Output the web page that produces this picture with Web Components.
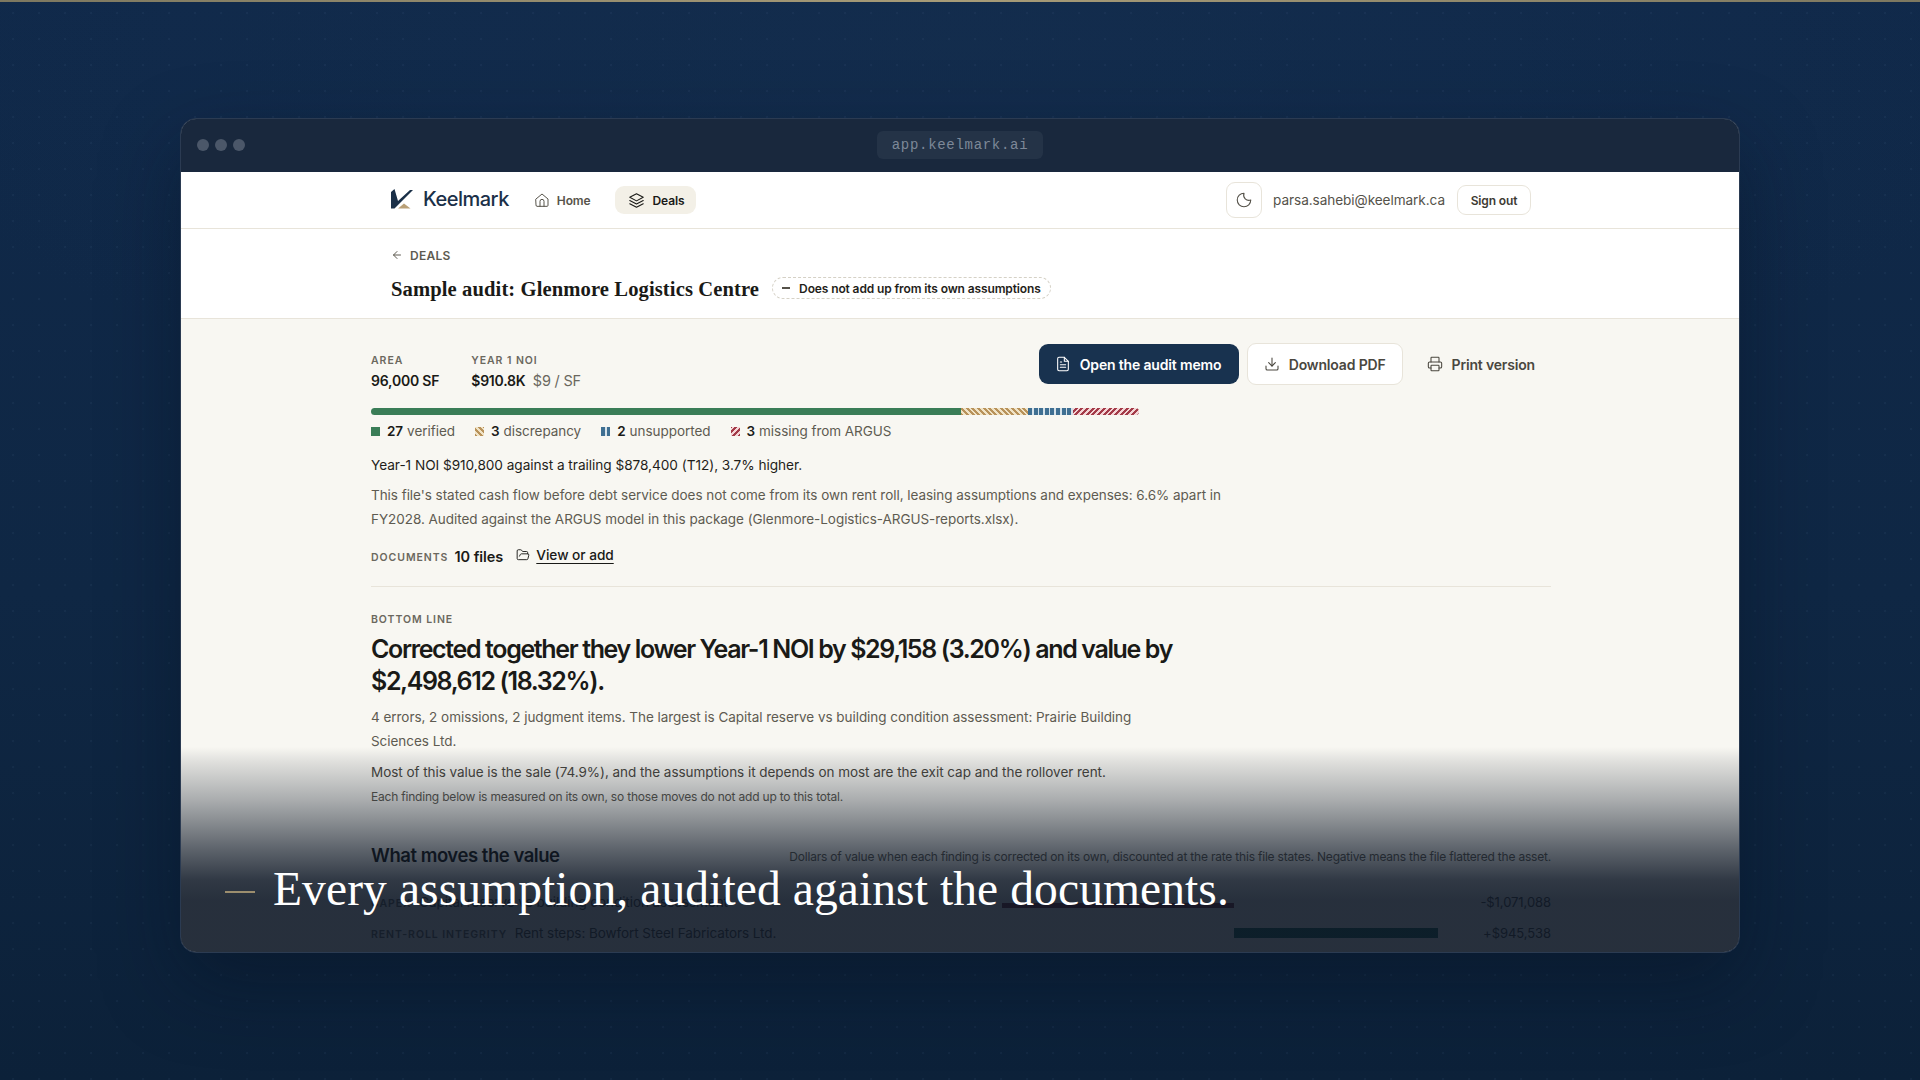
<!doctype html>
<html>
<head>
<meta charset="utf-8">
<style>
  html, body { margin: 0; padding: 0; height: 100%; overflow: hidden; background: #0f2640; }
  body { font-family: Inter, "Noto Sans", sans-serif; }
</style>
</head>
<body>
<km-stage>
  <km-window>
    <km-nav></km-nav>
    <km-deal-header></km-deal-header>
    <km-content>
      <km-summary></km-summary>
      <km-bottom-line></km-bottom-line>
      <km-movers></km-movers>
    </km-content>
  </km-window>
  <km-caption>Every assumption, audited against the documents.</km-caption>
</km-stage>

<script>
const icons = {
  home: '<path d="M3 10.5 12 3l9 7.5V20a1.5 1.5 0 0 1-1.5 1.5h-15A1.5 1.5 0 0 1 3 20z"/><path d="M9 21.5V14a3 3 0 0 1 6 0v7.5"/>',
  layers: '<path d="m12 2.5 9.5 5-9.5 5-9.5-5z"/><path d="m2.5 12 9.5 5 9.5-5"/><path d="m2.5 16.5 9.5 5 9.5-5"/>',
  moon: '<path d="M12 3a7 7 0 0 0 9 9 9 9 0 1 1-9-9z"/>',
  file: '<path d="M14 2H6a2 2 0 0 0-2 2v16a2 2 0 0 0 2 2h12a2 2 0 0 0 2-2V8z"/><path d="M14 2v6h6"/><path d="M8 13h8M8 17h8M8 9h2"/>',
  download: '<path d="M21 15v4a2 2 0 0 1-2 2H5a2 2 0 0 1-2-2v-4"/><path d="m7 10 5 5 5-5"/><path d="M12 15V3"/>',
  printer: '<path d="M6 9V3a1 1 0 0 1 1-1h10a1 1 0 0 1 1 1v6"/><path d="M6 18H4a2 2 0 0 1-2-2v-5a2 2 0 0 1 2-2h16a2 2 0 0 1 2 2v5a2 2 0 0 1-2 2h-2"/><rect x="6" y="14" width="12" height="8" rx="1"/>',
  folder: '<path d="m6 14 1.5-2.9A2 2 0 0 1 9.2 10H20a2 2 0 0 1 1.9 2.5l-1.5 6a2 2 0 0 1-2 1.5H4a2 2 0 0 1-2-2V5a2 2 0 0 1 2-2h3.9a2 2 0 0 1 1.7.9l.8 1.2a2 2 0 0 0 1.7.9H18a2 2 0 0 1 2 2v2"/>',
  back: '<path d="m12 19-7-7 7-7"/><path d="M19 12H5"/>'
}
const icon = (name, size, width = 1.75) =>
  `<svg width="${size}" height="${size}" viewBox="0 0 24 24" fill="none" stroke="currentColor" stroke-width="${width}" stroke-linecap="round" stroke-linejoin="round" style="flex:none;display:block">${icons[name]}</svg>`

const hatch = {
  tan: 'repeating-linear-gradient(45deg,#b8925a 0 2px,#f0e3c6 2px 4px)',
  blue: 'repeating-linear-gradient(90deg,#3f6f92 0 4px,#d6e2ea 4px 5.6px)',
  red: 'repeating-linear-gradient(-45deg,#a33a48 0 2px,#f4d5d6 2px 4px)'
}

// small helper, every element is the same shape: markup plus styles in an open root
const define = (tag, style, html) => {
  customElements.define(tag, class extends HTMLElement {
    constructor() {
      super()
      const shadowRoot = this.attachShadow({ mode: 'open' })
      shadowRoot.innerHTML = `<style>${style}</style>${html}`
    }
  })
}

define('km-stage', `
  :host {
    display: block;
    width: 1920px;
    height: 1080px;
    box-sizing: border-box;
    padding-top: 118px;
    background-color: #0f2742;
    background-image:
      radial-gradient(circle at 1px 1px, rgba(130,160,200,.06) 1.1px, transparent 1.6px),
      radial-gradient(ellipse 1100px 420px at 50% 4%, rgba(22,48,80,.5) 0%, rgba(22,48,80,0) 100%),
      linear-gradient(180deg, #10294a 0%, #0f2744 55%, #0c2139 100%);
    background-size: 26px 26px, auto, auto;
    background-position: 12px 12px, 0 0, 0 0;
    position: relative;
    overflow: hidden;
  }
  .strip {
    position: absolute; top: 0; left: 0; right: 0; height: 2px;
    background: linear-gradient(90deg, #7d7860, #a89c78 50%, #7d7860);
  }
  .frame { position: relative; width: 1560px; height: 835px; margin-left: 180px; }
`, `
  <div class="strip"></div>
  <div class="frame"><slot></slot></div>
`)

define('km-window', `
  :host {
    display: flex;
    flex-direction: column;
    height: 835px;
    box-sizing: border-box;
    border: 1px solid #2b3b52;
    border-radius: 16px;
    overflow: hidden;
    background: #f8f7f2;
    background-clip: padding-box;
    color: #1a1a17;
    box-shadow: 0 30px 80px rgba(5,15,30,.4);
    position: relative;
  }
  .bar {
    flex: none;
    height: 53px;
    box-sizing: border-box;
    padding: 0 16px 2px;
    background: #19283d;
    display: grid;
    grid-template-columns: 1fr auto 1fr;
    align-items: center;
  }
  .dots { display: flex; gap: 6px; }
  .dots i { width: 12px; height: 12px; border-radius: 50%; background: #4b5769; }
  .url {
    font: 14px "Liberation Mono", "DejaVu Sans Mono", monospace;
    letter-spacing: .7px;
    color: #7d8898;
    background: #243347;
    border-radius: 6px;
    padding: 0 15px;
    height: 28px;
    line-height: 28px;
  }
  .fade {
    position: absolute; left: 0; right: 0; bottom: 0; height: 205px;
    background: linear-gradient(180deg,
      rgba(10,20,35,0) 0%,
      rgba(10,20,35,.1) 7%,
      rgba(10,20,35,.33) 26%,
      rgba(10,20,35,.65) 50%,
      rgba(10,20,35,.84) 65%,
      rgba(10,20,35,.88) 75%,
      rgba(10,20,35,.88) 100%);
    pointer-events: none;
  }
`, `
  <div class="bar">
    <div class="dots"><i></i><i></i><i></i></div>
    <div class="url">app.keelmark.ai</div>
    <div></div>
  </div>
  <slot></slot>
  <div class="fade"></div>
`)

define('km-nav', `
  :host {
    display: flex;
    flex: none;
    align-items: center;
    height: 56px;
    padding: 0 208px 0 210px;
    background: #fff;
    border-bottom: 1px solid #e8e4da;
    font-size: 12px;
    letter-spacing: -.01em;
  }
  .logo { display: flex; align-items: center; gap: 10px; margin-right: 14px; margin-top: -2px; }
  .word { font-size: 20px; font-weight: 500; color: #1b3048; letter-spacing: -.025em; }
  .link { display: flex; align-items: center; gap: 7px; height: 28px; padding: 0 11px; font-weight: 600; color: #57544b; border-radius: 9px; }
  .link.on { background: #f3f0e7; color: #1a1a17; margin-left: 13px; padding: 0 12px 0 13px; gap: 8px; }
  .right { margin-left: auto; display: flex; align-items: center; }
  .moon { width: 36px; height: 36px; display: grid; place-items: center; border: 1px solid #e8e4da; border-radius: 9px; color: #55524a; box-sizing: border-box; }
  .mail { font-size: 13.6px; color: #55524a; margin: 0 12px 0 11px; letter-spacing: -.005em; }
  .out { height: 30px; width: 74px; box-sizing: border-box; display: grid; place-items: center; border: 1px solid #e8e4da; border-radius: 9px; font-weight: 600; color: #3d3b34; }
`, `
  <div class="logo">
    <svg width="22" height="20" viewBox="0 0 22 20">
      <path d="M0 3 3.5 0 7 12 19 1h3L3.5 19.5H0z" fill="#1b3048"/>
      <path d="M7 19.5 13 14.5 19.5 19.5z" fill="#b9a077"/>
    </svg>
    <span class="word">Keelmark</span>
  </div>
  <div class="link">${icon('home', 16, 1.5)}<span>Home</span></div>
  <div class="link on">${icon('layers', 17, 1.5)}<span>Deals</span></div>
  <div class="right">
    <div class="moon">${icon('moon', 18, 1.5)}</div>
    <span class="mail">parsa.sahebi@keelmark.ca</span>
    <div class="out">Sign out</div>
  </div>
`)

define('km-deal-header', `
  :host {
    display: block;
    flex: none;
    height: 90px;
    box-sizing: border-box;
    background: #fff;
    border-bottom: 1px solid #e8e4da;
    padding: 17px 0 0 210px;
  }
  .back { display: flex; align-items: center; gap: 7px; height: 18px; font-size: 12px; font-weight: 600; letter-spacing: .02em; color: #5e5b51; }
  .row { display: flex; align-items: center; gap: 13px; margin-top: 10px; height: 30px; }
  h1 { margin: 0; font: 700 20.6px "Liberation Serif", "DejaVu Serif", serif; color: #1a1a17; letter-spacing: .1px; }
  .badge {
    display: flex; align-items: center; gap: 9px; height: 22px; padding: 0 9px; box-sizing: border-box; margin-top: -2px;
    border: 1px dashed #d5d1c6; border-radius: 11px; font-size: 12px; font-weight: 600; letter-spacing: -.01em; color: #1f1e1a;
  }
  .badge i { display: block; width: 8px; height: 1.6px; background: #55524a; }
`, `
  <div class="back">${icon('back', 12, 2)}<span>DEALS</span></div>
  <div class="row">
    <h1>Sample audit: Glenmore Logistics Centre</h1>
    <div class="badge"><i></i><span>Does not add up from its own assumptions</span></div>
  </div>
`)

define('km-content', `
  :host {
    display: block;
    padding: 0 188px 0 190px;
    flex: 1;
    min-height: 0;
    overflow: hidden;
  }
`, `<slot></slot>`)

define('km-summary', `
  :host {
    display: block;
    padding-top: 25px;
    border-bottom: 1px solid #e8e4da;
    height: 268px;
    box-sizing: border-box;
    font-size: 13.5px;
    letter-spacing: -.003em;
  }
  .top { display: flex; height: 64px; align-items: flex-start; }
  .metric { margin-right: 32px; padding-top: 10px; }
  .metric label { display: block; font-size: 10.5px; font-weight: 600; letter-spacing: .09em; color: #6b685e; line-height: 14px; }
  .metric b { display: block; font-size: 14px; font-weight: 600; margin-top: 4px; color: #1a1a17; letter-spacing: -.015em; }
  .metric span { font-weight: 400; color: #6b685e; margin-left: 4px; font-size: 14.5px; }
  .actions { margin-left: auto; display: flex; align-items: center; gap: 8px; margin-top: -1px; }
  .btn { display: flex; align-items: center; gap: 9px; height: 40px; box-sizing: border-box; padding: 0 16px; border-radius: 9px; font-size: 14px; font-weight: 600; letter-spacing: -.012em; color: #4a473f; }
  .primary { background: #18324f; color: #fff; width: 200px; }
  .ghost { background: #fff; border: 1px solid #e8e4da; height: 42px; }
  .bar { display: flex; width: 768px; height: 7px; border-radius: 4px; overflow: hidden; }
  .bar i { display: block; height: 100%; }
  .legend { display: flex; align-items: center; margin-top: 6px; height: 20px; color: #5e5b51; }
  .legend span { display: flex; align-items: center; margin-right: 20px; }
  .legend i { width: 9px; height: 9px; margin-right: 7px; display: block; }
  .legend b { font-weight: 600; color: #1a1a17; margin-right: 4px; }
  .lead { margin: 12px 0 0; line-height: 24px; color: #1f1e1a; font-size: 13.65px; }
  .para { margin: 6px 0 0; line-height: 24px; color: #5e5b51; width: 860px; }
  .docs { display: flex; align-items: center; margin-top: 13px; height: 24px; }
  .docs label { font-size: 10.5px; font-weight: 600; letter-spacing: .09em; color: #6b685e; margin-right: 6px; padding-top: 2px; }
  .docs b { font-weight: 600; margin-right: 13px; color: #1a1a17; font-size: 14.5px; }
  .docs a { display: flex; align-items: center; gap: 6px; color: #1a1a17; font-weight: 500; margin-top: -3px; font-size: 13.7px; }
  .docs u { text-underline-offset: 3px; }
`, `
  <div class="top">
    <div class="metric"><label>AREA</label><b>96,000 SF</b></div>
    <div class="metric"><label>YEAR 1 NOI</label><b>$910.8K <span>$9 / SF</span></b></div>
    <div class="actions">
      <div class="btn primary">${icon('file', 16, 1.6)}<span>Open the audit memo</span></div>
      <div class="btn ghost">${icon('download', 16, 1.6)}<span>Download PDF</span></div>
      <div class="btn">${icon('printer', 16, 1.6)}<span>Print version</span></div>
    </div>
  </div>
  <div class="bar">
    <i style="width:590px;background:#3a7d57"></i>
    <i style="width:67px;background:${hatch.tan}"></i>
    <i style="width:45px;background:${hatch.blue}"></i>
    <i style="width:66px;background:${hatch.red}"></i>
  </div>
  <div class="legend">
    <span><i style="background:#3a7d57"></i><b>27</b> verified</span>
    <span><i style="background:${hatch.tan}"></i><b>3</b> discrepancy</span>
    <span><i style="background:${hatch.blue}"></i><b>2</b> unsupported</span>
    <span><i style="background:${hatch.red}"></i><b>3</b> missing from ARGUS</span>
  </div>
  <p class="lead">Year-1 NOI $910,800 against a trailing $878,400 (T12), 3.7% higher.</p>
  <p class="para">This file's stated cash flow before debt service does not come from its own rent roll, leasing assumptions and expenses: 6.6% apart in FY2028. Audited against the ARGUS model in this package (Glenmore-Logistics-ARGUS-reports.xlsx).</p>
  <div class="docs">
    <label>DOCUMENTS</label><b>10 files</b>
    <a>${icon('folder', 14, 1.6)}<u>View or add</u></a>
  </div>
`)

define('km-bottom-line', `
  :host { display: block; padding-top: 25px; letter-spacing: -.003em; font-size: 13.5px; }
  label { display: block; font-size: 10.5px; font-weight: 600; letter-spacing: .09em; color: #6b685e; line-height: 16px; }
  h2 { margin: 5px 0 0; font-size: 25px; line-height: 32px; font-weight: 600; letter-spacing: -1.37px; color: #1a1a17; width: 830px; }
  .a { margin: 8px 0 0; line-height: 24px; color: #5e5b51; width: 780px; }
  .b { margin: 6.5px 0 0; line-height: 24px; color: #4a473f; }
  .c { margin: 3px 0 0; font-size: 12px; line-height: 20px; color: #5e5b51; letter-spacing: -.2px; }
`, `
  <label>BOTTOM LINE</label>
  <h2>Corrected together they lower Year-1 NOI by $29,158 (3.20%) and value by $2,498,612 (18.32%).</h2>
  <p class="a">4 errors, 2 omissions, 2 judgment items. The largest is Capital reserve vs building condition assessment: Prairie Building Sciences Ltd.</p>
  <p class="b">Most of this value is the sale (74.9%), and the assumptions it depends on most are the exit cap and the rollover rent.</p>
  <p class="c">Each finding below is measured on its own, so those moves do not add up to this total.</p>
`)

define('km-movers', `
  :host { display: block; padding-top: 36px; font-size: 13.5px; letter-spacing: -.005em; }
  .head { display: flex; justify-content: space-between; align-items: center; height: 24px; margin-bottom: 20px; }
  h3 { margin: 0; font-size: 18.5px; font-weight: 600; letter-spacing: -.025em; color: #1a1a17; }
  .note { font-size: 12px; color: #5e5b51; letter-spacing: -.2px; padding-top: 3px; }
  .row { display: grid; grid-template-columns: 631px 232px 204px 1fr; align-items: center; height: 31px; }
  .label { white-space: nowrap; color: #4a473f; }
  .label small { font-size: 10.5px; font-weight: 600; letter-spacing: .09em; color: #6b685e; margin-right: 4px; }
  .neg { height: 5px; margin-top: 6px; background: #7a2f3a; }
  .pos { height: 10px; background: #1f6a5a; }
  .amt { text-align: right; font-size: 13px; color: #4a473f; }
`, `
  <div class="head">
    <h3>What moves the value</h3>
    <span class="note">Dollars of value when each finding is corrected on its own, discounted at the rate this file states. Negative means the file flattered the asset.</span>
  </div>
  <div class="row">
    <div class="label"><small>CAPEX</small> Capital reserve vs building condition assessment</div>
    <div class="neg"></div><div></div><div class="amt">-$1,071,088</div>
  </div>
  <div class="row">
    <div class="label"><small>RENT-ROLL INTEGRITY</small> Rent steps: Bowfort Steel Fabricators Ltd.</div>
    <div></div><div class="pos"></div><div class="amt">+$945,538</div>
  </div>
`)

define('km-caption', `
  :host {
    position: absolute;
    left: 45px;
    top: 736px;
    display: flex;
    align-items: center;
    gap: 18px;
    color: #fff;
    font: 400 47.5px "Liberation Serif", "DejaVu Serif", serif;
    letter-spacing: .1px;
    white-space: nowrap;
    line-height: 70px;
  }
  i { display: block; width: 30px; height: 1.5px; background: #9c8e6e; margin-top: 6px; }
`, `<i></i><slot></slot>`)
</script>
</body>
</html>
